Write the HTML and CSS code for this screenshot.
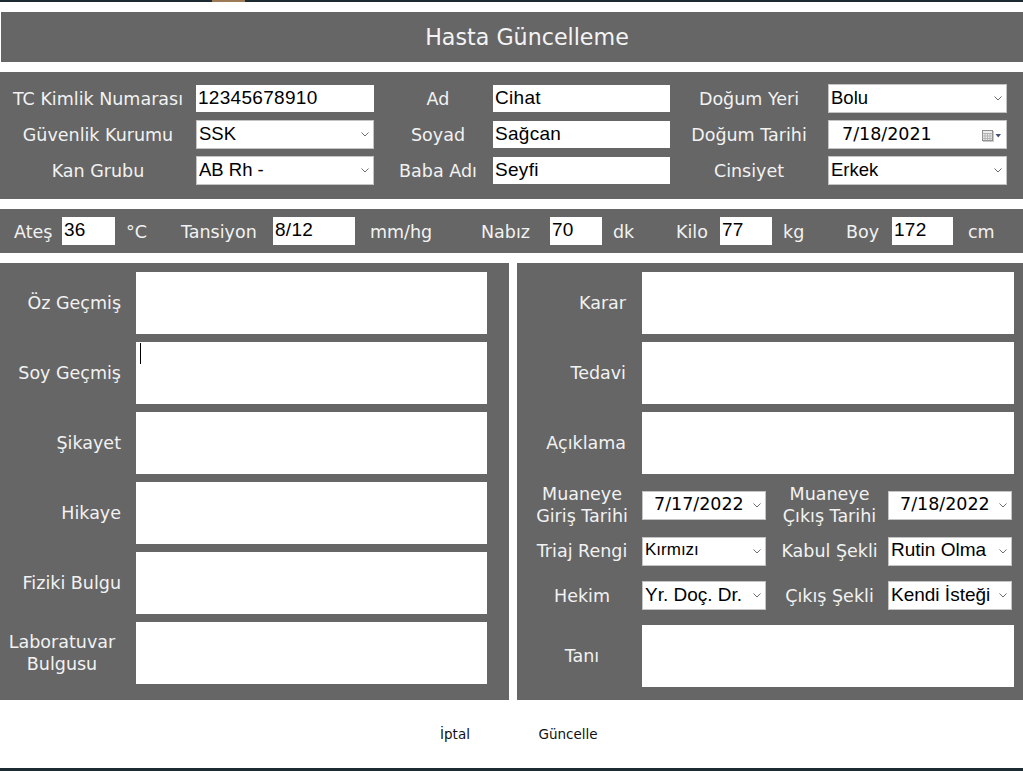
FILE: index.html
```html
<!DOCTYPE html>
<html lang="tr">
<head>
<meta charset="utf-8">
<title>Hasta Güncelleme</title>
<link rel="stylesheet" href="styles.css">
</head>
<body>
<div class="app">
  <div class="topline"><span class="thumb"></span></div>
  <div class="header">Hasta Güncelleme</div>

  <div class="info">
    <div class="lbl">TC Kimlik Numarası</div>
    <div class="tb">12345678910</div>
    <div class="lbl lbl2">Ad</div>
    <div class="tb">Cihat</div>
    <div class="lbl">Doğum Yeri</div>
    <div class="sel"><span>Bolu</span><svg class="chev" width="8" height="5" viewBox="0 0 8 5"><path d="M0.5 0.5L4 4L7.5 0.5"/></svg></div>

    <div class="lbl">Güvenlik Kurumu</div>
    <div class="sel"><span>SSK</span><svg class="chev" width="8" height="5" viewBox="0 0 8 5"><path d="M0.5 0.5L4 4L7.5 0.5"/></svg></div>
    <div class="lbl lbl2">Soyad</div>
    <div class="tb">Sağcan</div>
    <div class="lbl">Doğum Tarihi</div>
    <div class="sel date"><span class="datetxt">7/18/2021</span>
      <svg class="cal" width="22" height="13" viewBox="0 0 22 13">
        <rect x="1.5" y="1.5" width="10" height="10" fill="#ececec" stroke="#8c8c8c"/>
        <path d="M1.5 4.5H11.5M1.5 7H11.5M1.5 9.5H11.5M4 4.5V11.5M6.5 4.5V11.5M9 4.5V11.5" stroke="#b4b4b4" fill="none"/>
        <path d="M2 12.5H12.5V2" stroke="#c8c8c8" fill="none"/>
        <path d="M14.5 5H20L17.25 8.5Z" fill="#3d4f74"/>
      </svg>
    </div>

    <div class="lbl">Kan Grubu</div>
    <div class="sel"><span>AB Rh -</span><svg class="chev" width="8" height="5" viewBox="0 0 8 5"><path d="M0.5 0.5L4 4L7.5 0.5"/></svg></div>
    <div class="lbl lbl2">Baba Adı</div>
    <div class="tb">Seyfi</div>
    <div class="lbl">Cinsiyet</div>
    <div class="sel"><span>Erkek</span><svg class="chev" width="8" height="5" viewBox="0 0 8 5"><path d="M0.5 0.5L4 4L7.5 0.5"/></svg></div>
  </div>

  <div class="vitals">
    <div class="vl pl14">Ateş</div>
    <div class="tb vin">36</div>
    <div class="vl pl11">°C</div>
    <div class="vl">Tansiyon</div>
    <div class="tb vin">8/12</div>
    <div class="vl pl15">mm/hg</div>
    <div class="vl">Nabız</div>
    <div class="tb vin">70</div>
    <div class="vl pl11">dk</div>
    <div class="vl">Kilo</div>
    <div class="tb vin">77</div>
    <div class="vl pl11">kg</div>
    <div class="vl">Boy</div>
    <div class="tb vin">172</div>
    <div class="vl pl15">cm</div>
  </div>

  <div class="main">
    <div class="panel left">
      <div class="rl">Öz Geçmiş</div>
      <div class="ta"></div>
      <div class="rl">Soy Geçmiş</div>
      <div class="ta"><span class="caret"></span></div>
      <div class="rl">Şikayet</div>
      <div class="ta"></div>
      <div class="rl">Hikaye</div>
      <div class="ta"></div>
      <div class="rl">Fiziki Bulgu</div>
      <div class="ta"></div>
      <div class="rl lab">Laboratuvar<br>Bulgusu</div>
      <div class="ta"></div>
    </div>

    <div class="panel right">
      <div class="rr">Karar</div>
      <div class="ta wide"></div>
      <div class="rr">Tedavi</div>
      <div class="ta wide"></div>
      <div class="rr">Açıklama</div>
      <div class="ta wide"></div>

      <div class="cl c1">Muaneye<br>Giriş Tarihi</div>
      <div class="sel rs"><span class="dtxt">7/17/2022</span><svg class="chev" width="8" height="5" viewBox="0 0 8 5"><path d="M0.5 0.5L4 4L7.5 0.5"/></svg></div>
      <div class="cl c3">Muaneye<br>Çıkış Tarihi</div>
      <div class="sel rs"><span class="dtxt">7/18/2022</span><svg class="chev" width="8" height="5" viewBox="0 0 8 5"><path d="M0.5 0.5L4 4L7.5 0.5"/></svg></div>

      <div class="cl c1">Triaj Rengi</div>
      <div class="sel rs"><span class="small">Kırmızı</span><svg class="chev" width="8" height="5" viewBox="0 0 8 5"><path d="M0.5 0.5L4 4L7.5 0.5"/></svg></div>
      <div class="cl c3">Kabul Şekli</div>
      <div class="sel rs"><span>Rutin Olma</span><svg class="chev" width="8" height="5" viewBox="0 0 8 5"><path d="M0.5 0.5L4 4L7.5 0.5"/></svg></div>

      <div class="cl c1">Hekim</div>
      <div class="sel rs"><span>Yr. Doç. Dr.</span><svg class="chev" width="8" height="5" viewBox="0 0 8 5"><path d="M0.5 0.5L4 4L7.5 0.5"/></svg></div>
      <div class="cl c3">Çıkış Şekli</div>
      <div class="sel rs"><span>Kendi İsteği</span><svg class="chev" width="8" height="5" viewBox="0 0 8 5"><path d="M0.5 0.5L4 4L7.5 0.5"/></svg></div>

      <div class="cl c1">Tanı</div>
      <div class="ta wide"></div>
    </div>
  </div>

  <div class="footer">
    <button class="btn">İptal</button>
    <button class="btn">Güncelle</button>
  </div>
  <div class="bottomline"></div>
</div>
</body>
</html>
```

FILE: styles.css
```css
* { box-sizing: border-box; }

html, body {
  margin: 0;
  padding: 0;
  background: #ffffff;
}

.app {
  width: 1023px;
  height: 771px;
  display: flex;
  flex-direction: column;
  overflow: hidden;
  font-family: "DejaVu Sans", sans-serif;
  color: #ffffff;
}

.topline {
  height: 2px;
  background: #1c2a31;
  display: flex;
}

.thumb {
  width: 33px;
  height: 2px;
  margin-left: 212px;
  background: #9c7a55;
}

.header {
  margin-top: 10px;
  margin-left: 1px;
  height: 50px;
  background: #666666;
  display: flex;
  align-items: center;
  justify-content: center;
  font-size: 22.2px;
  color: #f4f4f4;
  padding-left: 30px;
}

/* patient info */
.info {
  margin-top: 10px;
  height: 127px;
  background: #666666;
  display: grid;
  grid-template-columns: 196px 178px 119px 177px 158px 179px;
  grid-template-rows: 28px 28px 28px;
  row-gap: 8px;
  padding-top: 13px;
}

.lbl {
  font-size: 17.5px;
  text-align: center;
  line-height: 28px;
  white-space: nowrap;
  color: #f2f2f2;
}

.lbl2 { padding-left: 9px; }

.tb {
  background: #ffffff;
  color: #000000;
  height: 27px;
  font-family: "Liberation Sans", Arial, sans-serif;
  font-size: 19px;
  letter-spacing: 0.3px;
  line-height: 25px;
  padding-left: 2px;
  white-space: nowrap;
  overflow: hidden;
}

.sel {
  background: #ffffff;
  color: #000000;
  height: 29px;
  margin-top: -1px;
  border: 1px solid #c4c4c4;
  display: flex;
  align-items: center;
  justify-content: space-between;
  padding: 0 4px 0 2px;
  font-family: "Liberation Sans", Arial, sans-serif;
  font-size: 18.5px;
  white-space: nowrap;
  overflow: hidden;
}

.sel span { margin-top: -2px; }

.chev {
  flex: none;
  fill: none;
  stroke: #6e6e6e;
  stroke-width: 1;
}

.date { padding-left: 13px; padding-right: 3px; }

.datetxt {
  font-family: "DejaVu Sans", sans-serif;
  font-size: 17.5px;
}

.cal { flex: none; margin-top: 1px; }

/* vitals */
.vitals {
  margin-top: 10px;
  height: 44px;
  background: #666666;
  display: grid;
  grid-template-columns: 62px 53px 66px 92px 82px 126px 69px 52px 74px 44px 52px 74px 46px 61px 70px;
  align-items: center;
}

.vl {
  font-size: 17.5px;
  white-space: nowrap;
  color: #f2f2f2;
  padding-top: 2px;
}

.pl14 { padding-left: 14px; }
.pl11 { padding-left: 11px; }
.pl15 { padding-left: 15px; }

.vin { height: 28px; }

/* main panels */
.main {
  margin-top: 10px;
  height: 437px;
  display: flex;
  gap: 8px;
}

.panel {
  background: #666666;
  display: grid;
  row-gap: 8px;
  padding-top: 9px;
  align-content: start;
}

.panel.left {
  width: 509px;
  grid-template-columns: 128px 351px;
  grid-template-rows: repeat(6, 62px);
  column-gap: 8px;
}

.panel.right {
  width: 506px;
  grid-template-columns: 125px 123px 123px 126px;
  grid-template-rows: 62px 62px 62px 46px 30px 43px 62px;
}

.ta {
  background: #ffffff;
  position: relative;
}

.ta.wide { grid-column: 2 / 5; }

.caret {
  position: absolute;
  left: 4px;
  top: 1px;
  width: 1px;
  height: 21px;
  background: #000000;
}

.rl {
  font-size: 17.5px;
  text-align: right;
  padding-right: 7px;
  align-self: center;
  white-space: nowrap;
  color: #f2f2f2;
}

.rl.lab {
  text-align: center;
  padding-right: 0;
  padding-left: 0;
  line-height: 22px;
  margin-left: -4px;
}

.rr {
  font-size: 17.5px;
  text-align: right;
  padding-right: 16px;
  align-self: center;
  white-space: nowrap;
  color: #f2f2f2;
}

.cl {
  font-size: 17.5px;
  text-align: center;
  align-self: center;
  line-height: 22px;
  white-space: nowrap;
  color: #f2f2f2;
}

.c1 { padding-left: 5px; }
.c3 { padding-left: 6px; }

.rs {
  width: 124px;
  margin-top: 0;
  height: 29px;
  align-self: center;
  padding-left: 2px;
  padding-right: 4px;
  font-size: 19px;
}

.panel.right > .rs:nth-of-type(odd) { width: 123px; }

.dtxt {
  font-family: "DejaVu Sans", sans-serif;
  font-size: 17.5px;
  padding-left: 9px;
}

.small { font-size: 17px; }

/* footer */
.footer {
  height: 68px;
  display: flex;
  align-items: center;
  gap: 23px;
  padding-left: 410px;
}

.btn {
  width: 90px;
  height: 30px;
  border: none;
  background: #ffffff;
  font-family: "DejaVu Sans", sans-serif;
  font-size: 13.5px;
  color: #111111;
  padding: 0;
}

.bottomline {
  height: 3px;
  background: #1c2a31;
}
```
